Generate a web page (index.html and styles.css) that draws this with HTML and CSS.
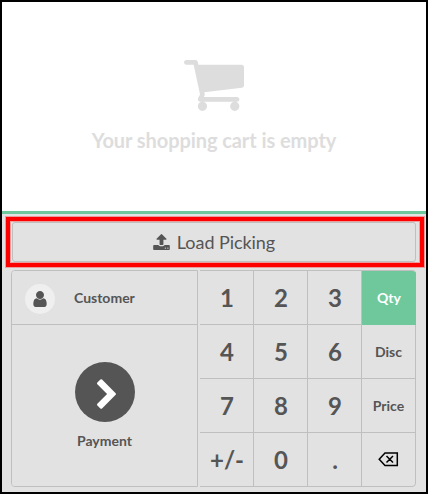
FILE: index.html
```html
<!DOCTYPE html>
<html lang="en">
<head>
<meta charset="utf-8">
<title>Point of Sale</title>
<link rel="stylesheet" href="styles.css">
</head>
<body>
<main class="pos">
  <section class="order-empty">
    <svg class="cart-icon" viewBox="64 256 1664 1408"><path d="M704 1536q0 52-38 90t-90 38-90-38-38-90 38-90 90-38 90 38 38 90zm896 0q0 52-38 90t-90 38-90-38-38-90 38-90 90-38 90 38 38 90zm128-1088v512q0 24-16.500 42.500t-40.500 21.500l-1044 122q13 60 13 70 0 16-24 64h920q26 0 45 19t19 45-19 45-45 19h-1024q-26 0-45-19t-19-45q0-11 8-31.500t16-36 21.500-40 15.500-29.500l-177-823h-204q-26 0-45-19t-19-45 19-45 45-19h256q16 0 28.500 6.500t19.500 15.500 13 24.500 8 26 5.500 29.500 4.500 26h1201q26 0 45 19t19 45z"/></svg>
    <h1>Your shopping cart is empty</h1>
  </section>
  <section class="controls">
    <div class="highlight">
      <button class="load">
        <svg class="upload-icon" viewBox="64 64 1664 1600"><path d="M1344 1472q0-26-19-45t-45-19-45 19-19 45 19 45 45 19 45-19 19-45zm256 0q0-26-19-45t-45-19-45 19-19 45 19 45 45 19 45-19 19-45zm128-224v320q0 40-28 68t-68 28h-1472q-40 0-68-28t-28-68v-320q0-40 28-68t68-28h427q21 56 70.500 92t110.500 36h256q61 0 110.500-36t70.500-92h427q40 0 68 28t28 68zm-325-648q-17 40-59 40h-256v448q0 26-19 45t-45 19h-256q-26 0-45-19t-19-45v-448h-256q-42 0-59-40-17-39 14-69l448-448q18-19 45-19t45 19l448 448q31 30 14 69z"/></svg>
        <span>Load Picking</span>
      </button>
    </div>
    <div class="pads">
      <div class="actionpad">
        <button class="customer">
          <span class="avatar"><svg viewBox="256 128 1280 1536"><path d="M1536 1399q0 109-62.500 187t-150.500 78h-854q-88 0-150.500-78t-62.500-187q0-85 8.500-160.500t31.500-152 58.500-131 94-89 134.500-34.500q131 128 313 128t313-128q76 0 134.500 34.500t94 89 58.500 131 31.500 152 8.500 160.500zm-256-887q0 159-112.500 271.500t-271.500 112.500-271.500-112.500-112.500-271.500 112.500-271.500 271.500-112.500 271.500 112.500 112.500 271.500z"/></svg></span>
          <span class="customer-name">Customer</span>
        </button>
        <button class="payment">
          <span class="pay-circle"><svg viewBox="346 26 1036 1612"><path d="M1363 877l-742 742q-19 19-45 19t-45-19l-166-166q-19-19-19-45t19-45l531-531-531-531q-19-19-19-45t19-45l166-166q19-19 45-19t45 19l742 742q19 19 19 45t-19 45z"/></svg></span>
          <span>Payment</span>
        </button>
      </div>
      <div class="numpad">
        <button>1</button><button>2</button><button>3</button><button class="mode selected">Qty</button>
        <button>4</button><button>5</button><button>6</button><button class="mode">Disc</button>
        <button>7</button><button>8</button><button>9</button><button class="mode">Price</button>
        <button>+/-</button><button>0</button><button>.</button>
        <button class="mode"><svg class="backspace" viewBox="0 0 21 15"><path d="M7 1h12.300v12.500H7L1.200 7.250zM8.500 4l6.500 6.500M15 4l-6.500 6.500"/></svg></button>
      </div>
    </div>
  </section>
</main>
</body>
</html>
```
FILE: styles.css
```css
* { box-sizing: border-box; }
body { margin: 0; }
.pos {
  width: 428px;
  height: 494px;
  border: 2px solid #000;
  background: #e2e2e2;
  display: flex;
  flex-direction: column;
  font-family: Lato, sans-serif;
  color: #555;
}
.order-empty {
  height: 212px;
  background: #fff;
  border-bottom: 3px solid #6ec89b;
  display: flex;
  flex-direction: column;
  align-items: center;
  padding-top: 58px;
  color: #ddd;
}
.cart-icon { width: 60px; height: 51px; flex: none; }
svg { display: block; fill: currentColor; }
h1 {
  margin: 17px 0 0;
  font-size: 20px;
  line-height: 24px;
  font-weight: 700;
  letter-spacing: -.07px;
}
.controls { padding: 3px 2px 0 4px; }
.highlight {
  height: 50px;
  width: 418px;
  border: 4px solid #f00;
  box-shadow: 0 0 0 1px rgba(255, 0, 0, .3), inset 0 0 0 1px rgba(255, 0, 0, .3);
  padding: 1px 0 0 2px;
}
button {
  appearance: none;
  margin: 0;
  padding: 0;
  border: 0 solid #bfbfbf;
  background: #e2e2e2;
  color: inherit;
  font: inherit;
}
.load {
  width: 404px;
  height: 40px;
  border-width: 1px;
  border-radius: 3px;
  display: flex;
  align-items: center;
  justify-content: center;
  gap: 7px;
  font-size: 18px;
  letter-spacing: -.05px;
}
.upload-icon { width: 17px; height: 16px; }
.pads { display: flex; gap: 2px; margin: 3px 0 0 5px; }
.actionpad {
  width: 187px;
  height: 217px;
  border: 1px solid #bfbfbf;
  border-radius: 4px 0 0 4px;
  overflow: hidden;
  display: flex;
  flex-direction: column;
  font-size: 14px;
  font-weight: 700;
}
.customer {
  height: 54px;
  border-bottom-width: 1px;
  display: flex;
  align-items: center;
  padding-left: 13px;
  padding-top: 2px;
}
.avatar {
  width: 30px;
  height: 30px;
  border-radius: 50%;
  background: #efefef;
  display: grid;
  place-items: center;
}
.avatar svg { width: 14px; height: 16px; }
.customer-name { margin-left: 19px; padding-bottom: 2px; }
.payment {
  flex: 1;
  display: flex;
  flex-direction: column;
  align-items: center;
  justify-content: flex-start;
  padding-top: 37px;
  gap: 10px;
}
.pay-circle {
  width: 60px;
  height: 60px;
  border-radius: 50%;
  background: #555;
  color: #fff;
  display: grid;
  place-items: center;
}
.pay-circle svg { width: 19px; height: 30px; margin: 3px 0 0 4px; }
.numpad {
  width: 216px;
  height: 217px;
  border-top: 1px solid #bfbfbf;
  border-radius: 0 4px 4px 0;
  overflow: hidden;
  display: grid;
  grid-template-columns: repeat(4, 54px);
  grid-template-rows: repeat(4, 54px);
  font-size: 24px;
  font-weight: 700;
}
.numpad button { border-width: 0 1px 1px 0; padding-left: 1px; }
.numpad .mode {
  font-size: 14px;
  padding-left: 0;
  display: grid;
  place-items: center;
}
.numpad .selected {
  background: #6ec89b;
  border-color: #6ec89b;
  color: #fff;
  padding-left: 1px;
}
.numpad button:last-child { border-bottom-right-radius: 4px; }
.backspace {
  width: 21px;
  height: 15px;
  fill: none;
  stroke: #000;
  stroke-width: 1.5;
}
```
